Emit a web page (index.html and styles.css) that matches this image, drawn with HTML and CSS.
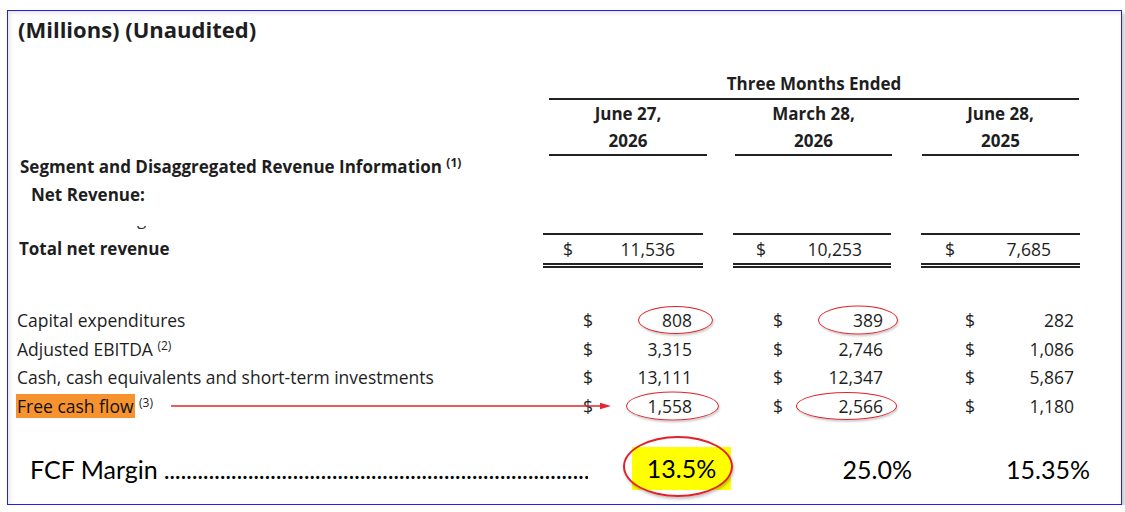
FILE: index.html
```html
<!DOCTYPE html>
<html lang="en">
<head>
<meta charset="utf-8">
<title>Free cash flow</title>
<link rel="stylesheet" href="styles.css">
</head>
<body>
<div class="frame">
  <h1 class="title">(Millions) (Unaudited)</h1>

  <div class="grid head1">
    <div class="months">Three Months Ended</div>
  </div>

  <div class="grid head2">
    <div></div>
    <div class="date d1">June 27,<br>2026</div>
    <div></div>
    <div class="date d2">March 28,<br>2026</div>
    <div></div>
    <div class="date d3">June 28,<br>2025</div>
  </div>

  <div class="section">Segment and Disaggregated Revenue Information <sup>(1)</sup></div>
  <div class="subsection">Net Revenue:</div>
  <div class="clip"><div class="clip-win"><span class="clip-text">g</span></div></div>

  <div class="grid total">
    <div class="total-label">Total net revenue</div>
    <div class="tcell t1"><span>$</span><span>11,536</span></div>
    <div></div>
    <div class="tcell t2"><span>$</span><span>10,253</span></div>
    <div></div>
    <div class="tcell t3"><span>$</span><span>7,685</span></div>
  </div>

  <div class="rows">
    <div class="grid row">
      <div class="label">Capital expenditures</div>
      <div class="cell c1"><span>$</span><span class="num">808<span class="oval o808"></span></span></div>
      <div></div>
      <div class="cell c2"><span>$</span><span class="num">389<span class="oval o389"></span></span></div>
      <div></div>
      <div class="cell c3"><span>$</span><span class="num">282</span></div>
    </div>
    <div class="grid row">
      <div class="label">Adjusted EBITDA <sup>(2)</sup></div>
      <div class="cell c1"><span>$</span><span class="num">3,315</span></div>
      <div></div>
      <div class="cell c2"><span>$</span><span class="num">2,746</span></div>
      <div></div>
      <div class="cell c3"><span>$</span><span class="num">1,086</span></div>
    </div>
    <div class="grid row">
      <div class="label">Cash, cash equivalents and short-term investments</div>
      <div class="cell c1"><span>$</span><span class="num">13,111</span></div>
      <div></div>
      <div class="cell c2"><span>$</span><span class="num">12,347</span></div>
      <div></div>
      <div class="cell c3"><span>$</span><span class="num">5,867</span></div>
    </div>
    <div class="grid row fcf-row">
      <div class="label"><span class="mark">Free cash flow</span> <sup>(3)</sup></div>
      <div class="cell c1"><span>$</span><span class="num">1,558<span class="oval o1558"></span></span></div>
      <div></div>
      <div class="cell c2"><span>$</span><span class="num">2,566<span class="oval o2566"></span></span></div>
      <div></div>
      <div class="cell c3"><span>$</span><span class="num">1,180</span></div>
      <svg class="arrow" width="440" height="10" viewBox="0 0 440 10" aria-hidden="true">
        <line x1="0" y1="5" x2="432" y2="5" stroke="#e5262c" stroke-width="1.6"/>
        <polygon points="429,1.8 440,5 429,8.2" fill="#e5262c"/>
      </svg>
    </div>
  </div>

  <div class="margin-row">
    <div class="m-label"><span class="m-text">FCF Margin</span><span class="dots">......................................................................................................................................................</span></div>
    <div class="m-v1"><span class="hl">13.5%<span class="big-oval"></span></span></div>
    <div class="m-v2">25.0%</div>
    <div class="m-v3">15.35%</div>
  </div>
</div>
</body>
</html>
```

FILE: styles.css
```css
body {
  margin: 0;
  background: #ffffff;
  font-family: "Open Sans", "Noto Sans", sans-serif;
  color: #1e1e1e;
}

.frame {
  box-sizing: border-box;
  margin: 10px 0 0 7px;
  width: 1115px;
  height: 495px;
  border: 1px solid #1f1ff2;
  box-shadow: 3px 3px 4px rgba(0, 0, 0, 0.22), inset 3px 3px 4px -1px rgba(0, 0, 0, 0.1);
}

.title {
  margin: 5px 0 0;
  padding-left: 10px;
  font-size: 22px;
  font-weight: 700;
  line-height: 26px;
  color: #1e1e1e;
}

.grid {
  display: grid;
  grid-template-columns: 535px 164px 26px 160px 28px 159px;
}

.head1 {
  margin-top: 31px;
}

.months {
  grid-column: 2 / 7;
  margin: 0 1px 0 6px;
  padding-bottom: 3px;
  border-bottom: 2px solid #222;
  text-align: center;
  font-size: 17px;
  font-weight: 700;
  line-height: 22px;
}

.date {
  font-size: 17px;
  font-weight: 700;
  line-height: 27px;
  text-align: center;
  border-bottom: 2px solid #222;
}

.d1 { margin: 0 0 0 6px; }
.d2 { margin: 0 1px 0 2px; }
.d3 { margin: 0 1px 0 1px; }

sup {
  font-size: 12px;
  line-height: 0;
  vertical-align: 6px;
}

.section {
  padding-left: 12px;
  font-size: 17px;
  font-weight: 700;
  line-height: 22px;
}

.subsection {
  margin-top: 6px;
  padding-left: 23px;
  font-size: 17px;
  font-weight: 700;
  line-height: 22px;
}

.clip {
  box-sizing: border-box;
  height: 27px;
  padding-top: 20px;
}

.clip-win {
  height: 5px;
  overflow: hidden;
  padding-left: 129px;
}

.clip-text {
  display: block;
  margin-top: -18px;
  font-size: 17px;
  line-height: 22px;
  color: #333;
}

.total-label {
  padding: 2px 0 0 11px;
  font-size: 17px;
  font-weight: 700;
  line-height: 28px;
}

.tcell {
  display: flex;
  justify-content: space-between;
  border-top: 2px solid #222;
  border-bottom: 5px double #222;
  font-size: 17.5px;
  line-height: 28px;
}

.t1 { margin-right: 4px; padding: 0 28px 0 20px; }
.t2 { margin-right: 2px; padding: 0 29px 0 23px; }
.t3 { padding: 0 29px 0 24px; }

.rows {
  margin-top: 38px;
}

.row {
  position: relative;
  height: 28.67px;
  font-size: 17.5px;
  line-height: 28.67px;
}

.label {
  padding-left: 9px;
  white-space: nowrap;
}

.cell {
  display: flex;
  justify-content: space-between;
}

.c1 { padding: 0 15px 0 40px; }
.c2 { padding: 0 10px 0 40px; }
.c3 { padding: 0 6px 0 44px; }

.num {
  position: relative;
}

.oval {
  position: absolute;
  top: 50%;
  transform: translateY(-50%);
  border: 1.5px solid #e2222a;
  border-radius: 50%;
  box-shadow: 1px 2px 2px rgba(0, 0, 0, 0.18);
}

.o808 { right: -21px; width: 73px; height: 26px; }
.o389 { right: -15px; width: 78px; height: 27px; }
.o1558 { right: -27px; width: 91px; height: 27px; }
.o2566 { right: -14px; width: 99px; height: 26px; }

.mark {
  display: inline-block;
  margin-left: -1px;
  padding: 0 1px;
  line-height: 24px;
  background: #f7932f;
  color: #111;
}

.arrow {
  position: absolute;
  left: 163px;
  top: calc(50% - 5px);
}

.margin-row {
  display: grid;
  grid-template-columns: 582px 170px 180px 160px;
  align-items: center;
  height: 44px;
  margin-top: 26px;
  font-family: "Lato", "Open Sans", sans-serif;
  font-size: 25px;
  color: #000;
}

.m-label {
  display: flex;
  padding: 0 2px 0 22px;
  white-space: nowrap;
  overflow: hidden;
}

.m-text {
  flex: none;
  padding-right: 6px;
}

.dots {
  flex: 1;
  overflow: hidden;
  letter-spacing: -0.3px;
}

.m-v1 {
  padding-left: 42px;
}

.hl {
  position: relative;
  display: inline-block;
  width: 99px;
  height: 43px;
  line-height: 43px;
  text-align: center;
  background: #ffff00;
}

.big-oval {
  position: absolute;
  left: -9px;
  right: -2px;
  top: -11px;
  bottom: -7px;
  border: 2px solid #e2222a;
  border-radius: 50%;
  box-shadow: 1px 2px 3px rgba(0, 0, 0, 0.25);
}

.m-v2 {
  padding-right: 28px;
  text-align: right;
}

.m-v3 {
  padding-right: 10px;
  text-align: right;
}
```
